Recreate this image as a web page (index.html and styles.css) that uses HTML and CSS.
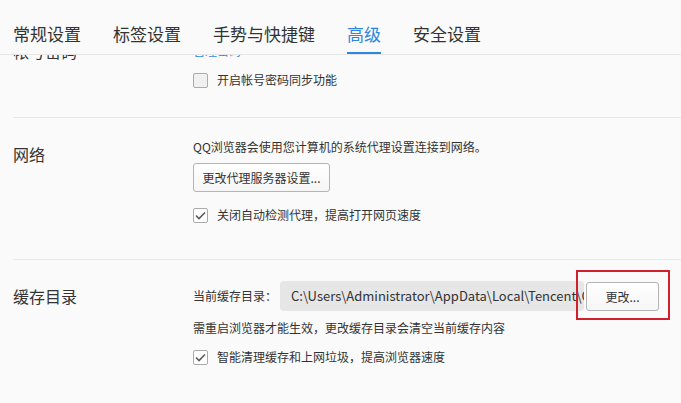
FILE: index.html
```html
<!DOCTYPE html>
<html>
<head>
    <meta charset="UTF-8">
    <title>高级设置</title>
    <link rel="stylesheet" href="styles.css">
</head>
<body>
    <div class="settings">
        <div class="tabs">
            <div class="tab">常规设置</div>
            <div class="tab">标签设置</div>
            <div class="tab">手势与快捷键</div>
            <div class="tab active">高级</div>
            <div class="tab">安全设置</div>
        </div>

        <div class="viewport">
            <div class="sections">
                <div class="section section-account">
                    <div class="section-title">帐号密码</div>
                    <div class="section-body">
                        <div class="line"><a class="link">管理密码</a></div>
                        <label class="check-row">
                            <span class="checkbox"></span>
                            开启帐号密码同步功能
                        </label>
                    </div>
                </div>

                <div class="section section-network">
                    <div class="section-title">网络</div>
                    <div class="section-body">
                        <div class="line">QQ浏览器会使用您计算机的系统代理设置连接到网络。</div>
                        <button class="btn btn-proxy">更改代理服务器设置...</button>
                        <label class="check-row">
                            <span class="checkbox checked">
                                <svg width="11" height="9" viewBox="0 0 11 9"><path d="M1 4.5 L4 7.5 L10 1.5" fill="none" stroke="#5a5a5a" stroke-width="1.6"/></svg>
                            </span>
                            关闭自动检测代理，提高打开网页速度
                        </label>
                    </div>
                </div>

                <div class="section section-cache">
                    <div class="section-title">缓存目录</div>
                    <div class="section-body">
                        <div class="cache-row">
                            <span class="cache-label">当前缓存目录：</span>
                            <div class="cache-path">C:\Users\Administrator\AppData\Local\Tencent\QQBrowser\User Data\Default\Cache</div>
                            <div class="btn-wrap">
                                <button class="btn btn-change">更改...</button>
                                <div class="highlight"></div>
                            </div>
                        </div>
                        <div class="line hint">需重启浏览器才能生效，更改缓存目录会清空当前缓存内容</div>
                        <label class="check-row">
                            <span class="checkbox checked">
                                <svg width="11" height="9" viewBox="0 0 11 9"><path d="M1 4.5 L4 7.5 L10 1.5" fill="none" stroke="#5a5a5a" stroke-width="1.6"/></svg>
                            </span>
                            智能清理缓存和上网垃圾，提高浏览器速度
                        </label>
                    </div>
                </div>
            </div>
        </div>
    </div>
</body>
</html>
```

FILE: styles.css
```css
body {
    margin: 0;
    background-color: #fafafa;
    font-family: "Noto Sans CJK SC", "Noto Sans", sans-serif;
    color: #333;
}
.settings {
    width: 681px;
    height: 403px;
    overflow: hidden;
}
.tabs {
    display: flex;
    gap: 32px;
    padding-left: 13px;
    border-bottom: 1px solid #e6e6e6;
    box-sizing: border-box;
    height: 55px;
}
.tab {
    font-size: 17px;
    line-height: 20px;
    padding-top: 24px;
    height: 54px;
    box-sizing: border-box;
    color: #333;
    white-space: nowrap;
}
.tab.active {
    color: #2d86e0;
    border-bottom: 2px solid #2d86e0;
}
.viewport {
    height: 348px;
    overflow: hidden;
}
.sections {
    margin-top: -35px;
}
.section {
    display: flex;
    margin-left: 13px;
    border-bottom: 1px solid #e8e8e8;
}
.section-title {
    width: 180px;
    flex-shrink: 0;
    font-size: 16px;
    line-height: 20px;
}
.section-body {
    flex: 1;
    min-width: 0;
    padding-right: 22px;
    font-size: 12px;
    line-height: 20px;
}
.line {
    white-space: nowrap;
}
.link {
    color: #2d86e0;
}
.check-row {
    display: flex;
    align-items: center;
    gap: 9px;
    white-space: nowrap;
}
.checkbox {
    width: 13px;
    height: 13px;
    border: 1px solid #ababab;
    border-radius: 2px;
    background-color: #f0f0f0;
    display: flex;
    align-items: center;
    justify-content: center;
}
.checkbox.checked {
    background-color: #fff;
}
.btn {
    font-family: inherit;
    font-size: 12px;
    color: #333;
    height: 29px;
    padding: 0 10px;
    border: 1px solid #b4b4b4;
    border-radius: 3px;
    background: linear-gradient(#ffffff, #f6f6f6);
    cursor: pointer;
}

.section-account {
    padding-top: 21px;
    padding-bottom: 27px;
}
.section-account .check-row {
    margin-top: 9px;
}

.section-network {
    padding-top: 19px;
    padding-bottom: 34px;
}
.section-network .section-title {
    padding-top: 7px;
}
.section-network .btn-proxy {
    display: block;
    margin-top: 6px;
    width: 137px;
    padding: 0;
}
.section-network .check-row {
    margin-top: 13px;
}

.section-cache {
    padding-top: 21px;
    padding-bottom: 40px;
    border-bottom: none;
}
.section-cache .section-title {
    padding-top: 5px;
}
.cache-row {
    display: flex;
    align-items: center;
    height: 30px;
}
.cache-label {
    width: 87px;
    flex-shrink: 0;
}
.cache-path {
    flex: 1;
    min-width: 0;
    height: 30px;
    line-height: 30px;
    padding-left: 11px;
    background-color: #e6e6e6;
    border-radius: 4px;
    white-space: nowrap;
    overflow: hidden;
    font-size: 13px;
}
.btn-wrap {
    position: relative;
    flex-shrink: 0;
    margin-left: 2px;
}
.btn-change {
    width: 73px;
    display: block;
}
.highlight {
    position: absolute;
    left: -10px;
    top: -12px;
    width: 90px;
    height: 46px;
    border: 2px solid #d0202e;
}
.hint {
    margin-top: 7px;
}
.section-cache .check-row {
    margin-top: 9px;
}
```
